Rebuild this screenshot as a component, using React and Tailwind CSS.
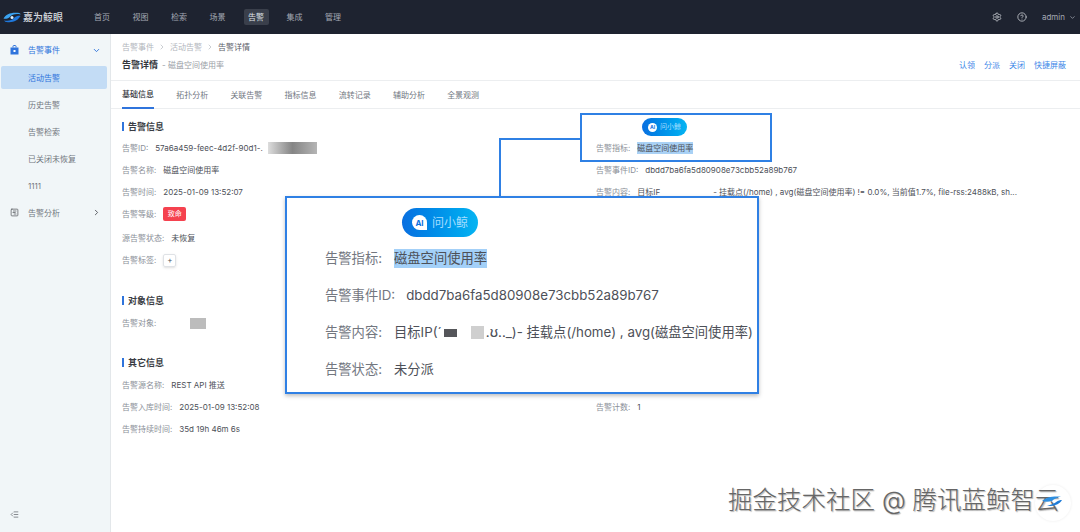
import { ChevronDown, ChevronRight, Settings, CircleHelp, ListIndentDecrease, SquareChartGantt } from "lucide-react";

const navItems = ["首页", "视图", "检索", "场景", "告警", "集成", "管理"];
const tabs = ["基础信息", "拓扑分析", "关联告警", "指标信息", "流转记录", "辅助分析", "全景观测"];
const subItems = ["活动告警", "历史告警", "告警检索", "已关闭未恢复", "1111"];

function Logo() {
  return (
    <svg width="18" height="11" viewBox="0 0 18 11">
      <path d="M0.5 6.5C3 2 8 0 15 0.8C16.5 1 17.5 1.5 17.5 2.4C13 1.4 9 2.4 6.5 5.2C4.5 6.7 2.5 7 0.5 6.5Z" fill="#3aa3f2" />
      <path d="M17.5 4C15 8.5 10 11 3.5 10C2.5 9.8 1.5 9.3 1 8.4C5 9.3 9 8.5 11.5 5.6C13.5 4 15.5 3.6 17.5 4Z" fill="#1f78dc" />
      <circle cx="9" cy="5.4" r="1.5" fill="#dff1ff" />
    </svg>
  );
}

function BagIcon() {
  return (
    <svg width="9" height="10" viewBox="0 0 9 10" className="shrink-0">
      <path d="M3 2.5V1.2C3 .8 3.3.5 3.7.5H5.3C5.7.5 6 .8 6 1.2V2.5" fill="none" stroke="#2f74dc" />
      <path d="M.5 2.5H8.5V9.5H.5Z" fill="#2f74dc" />
      <rect x="3.5" y="5" width="2" height="2" fill="#ffffff" />
    </svg>
  );
}

function Header() {
  return (
    <header className="flex h-[34px] shrink-0 items-center bg-[#1e2330] pr-[4px] text-[8px] text-[#a3a8b3]">
      <div className="flex w-[89.5px] items-center gap-[2px] pl-[3px]">
        <Logo />
        <span className="text-[10px] font-medium text-[#d5d8de]">嘉为鲸眼</span>
      </div>
      <nav className="flex items-center gap-[13.5px]">
        {navItems.map((item) => (
          <span
            key={item}
            className={
              item === "告警"
                ? "flex h-[16px] w-[25px] items-center justify-center rounded-[2px] bg-[#3a3f4b] text-[#dfe2e7]"
                : "flex h-[16px] w-[25px] items-center justify-center"
            }
          >
            {item}
          </span>
        ))}
      </nav>
      <div className="ml-auto flex items-center">
        <Settings size={10} strokeWidth={2} className="text-[#c3c6cd]" />
        <CircleHelp size={10} strokeWidth={2} className="ml-[15px] text-[#c3c6cd]" />
        <span className="ml-[15px]">admin</span>
        <ChevronDown size={7} strokeWidth={2.5} className="ml-[4px]" />
      </div>
    </header>
  );
}

function Sidebar() {
  return (
    <aside className="flex w-[111px] shrink-0 flex-col border-r border-[#e3e7ea] bg-[#f1f6f8] text-[8px] text-[#72777f]">
      <div className="flex h-[32px] items-center pl-[10px] pr-[9px] text-[#2f74dc]">
        <BagIcon />
        <span className="ml-[9px]">告警事件</span>
        <ChevronDown size={9} strokeWidth={2.5} className="ml-auto" />
      </div>
      <div className="ml-[1px] mr-[3px] flex h-[23px] items-center rounded-[2px] bg-[#c3dcf5] pl-[27px] text-[#2f74dc]">活动告警</div>
      {subItems.slice(1).map((item) => (
        <div key={item} className="mt-[4px] flex h-[23px] items-center pl-[28px]">{item}</div>
      ))}
      <div className="mt-[4px] flex h-[23px] items-center pl-[10px] pr-[9px]">
        <SquareChartGantt size={9} strokeWidth={2} className="text-[#55595f]" />
        <span className="ml-[9px]">告警分析</span>
        <ChevronRight size={9} strokeWidth={2.5} className="ml-auto text-[#55595f]" />
      </div>
      <ListIndentDecrease size={9} strokeWidth={1.8} className="ml-[10px] mb-[13px] mt-auto text-[#55595f]" />
    </aside>
  );
}

function Row({ label, children, className = "h-[22px]" }) {
  return (
    <div className={`flex items-center whitespace-nowrap ${className}`}>
      <span className="mr-[7px] text-[#8b9098]">{label}:</span>
      <span className="flex items-center text-[#4d5058]">{children}</span>
    </div>
  );
}

function SectionTitle({ children, className = "" }) {
  return (
    <div className={`flex h-[14px] items-center ${className}`}>
      <span className="h-[9px] w-[2px] bg-[#2f74dc]" />
      <span className="ml-[4px] text-[9px] font-bold leading-none text-[#3a3d44]">{children}</span>
    </div>
  );
}

function LeftColumn() {
  return (
    <div className="w-[474px] shrink-0">
      <SectionTitle>告警信息</SectionTitle>
      <div className="mt-[4px]">
        <Row label="告警ID">
          57a6a459-feec-4d2f-90d1-.
          <span className="ml-[5px] h-[12px] w-[49px] bg-gradient-to-r from-[#dddddd] via-[#858585] to-[#b5b5b5]" />
        </Row>
        <Row label="告警名称">磁盘空间使用率</Row>
        <Row label="告警时间">2025-01-09 13:52:07</Row>
        <Row label="告警等级">
          <span className="flex h-[14px] w-[23px] items-center justify-center rounded-[2px] bg-[#f5424f] text-[7px] text-white">致命</span>
        </Row>
        <Row label="源告警状态" className="mt-[2px] h-[22px]">未恢复</Row>
        <Row label="告警标签">
          <span className="flex h-[13px] w-[13px] items-center justify-center rounded-[2px] border border-[#dfe2e6] text-[8px] leading-none shadow-sm">+</span>
        </Row>
      </div>
      <SectionTitle className="mt-[22px]">对象信息</SectionTitle>
      <div className="mt-[5px]">
        <Row label="告警对象">
          <span className="ml-[27px] h-[11px] w-[16px] bg-[#bcbcbc]" />
        </Row>
      </div>
      <SectionTitle className="mt-[21px]">其它信息</SectionTitle>
      <div className="mt-[5px]">
        <Row label="告警源名称">REST API 推送</Row>
        <Row label="告警入库时间">2025-01-09 13:52:08</Row>
        <Row label="告警持续时间">35d 19h 46m 6s</Row>
      </div>
    </div>
  );
}

function RightColumn() {
  return (
    <div className="min-w-0 flex-1 pt-[40px]">
      <Row label="告警事件ID">dbdd7ba6fa5d80908e73cbb52a89b767</Row>
      <Row label="告警内容">
        目标IF
        <span className="ml-[53px]">- 挂载点(/home) , avg(磁盘空间使用率) != 0.0%, 当前值1.7%, file-rss:2488kB, sh...</span>
      </Row>
      <div className="mt-[193px]">
        <Row label="告警计数">1</Row>
      </div>
    </div>
  );
}

function AskButton({ large }) {
  return (
    <span
      className={
        large
          ? "flex h-[29px] w-[76px] items-center justify-center gap-[5px] rounded-full bg-gradient-to-r from-[#0a6fe0] to-[#07b4f2] text-[12px] text-[#a5deff]"
          : "flex h-[18px] w-[45px] items-center justify-center gap-[3px] rounded-full bg-gradient-to-r from-[#0a6fe0] to-[#07b4f2] text-[7px] text-[#a5deff]"
      }
    >
      <span
        className={
          large
            ? "flex h-[15px] w-[15px] items-center justify-center rounded-full rounded-br-[3px] bg-white text-[8px] font-bold leading-none text-[#0a6fe0]"
            : "flex h-[9px] w-[9px] items-center justify-center rounded-full bg-white text-[5px] font-bold leading-none text-[#0a6fe0]"
        }
      >
        AI
      </span>
      问小鲸
    </span>
  );
}

function SmallCallout() {
  return (
    <>
      <div className="absolute left-[499px] top-[138px] h-[59px] w-[82px] border-l-2 border-t-2 border-[#2f80e4]" />
      <div className="absolute left-[580px] top-[113px] flex h-[49px] w-[192px] flex-col border-2 border-[#2f80e4] bg-white pl-[14px] text-[8px]">
        <div className="ml-[46px] mt-[3px]"><AskButton /></div>
        <div className="mt-[6px] flex items-center whitespace-nowrap">
          <span className="mr-[7px] text-[#8b9098]">告警指标:</span>
          <span className="bg-[#a9d1f5] text-[#4d5058]">磁盘空间使用率</span>
        </div>
      </div>
    </>
  );
}

function LargeCallout() {
  return (
    <div className="absolute left-[285px] top-[196px] h-[198px] w-[474px] border-2 border-[#2f80e4] bg-white pl-[38px] text-[13.3px] shadow-[0_2px_4px_rgba(0,0,0,0.25)]">
      <div className="ml-[77px] mt-[10px]"><AskButton large /></div>
      <div className="mt-[3px] flex h-[37px] items-center whitespace-nowrap">
        <span className="mr-[12px] text-[#73777f]">告警指标:</span>
        <span className="bg-[#a3d0f8] text-[#4d5058]">磁盘空间使用率</span>
      </div>
      <div className="flex h-[37px] items-center whitespace-nowrap">
        <span className="mr-[11px] text-[#73777f]">告警事件ID:</span>
        <span className="text-[#4d5058]">dbdd7ba6fa5d80908e73cbb52a89b767</span>
      </div>
      <div className="flex h-[37px] items-center whitespace-nowrap">
        <span className="mr-[12px] text-[#73777f]">告警内容:</span>
        <span className="flex items-center text-[#4d5058]">
          目标IP(´
          <span className="ml-[2px] h-[8px] w-[13px] bg-[#55565a]" />
          <span className="ml-[14px] h-[13px] w-[13px] bg-[#cfcfcf]" />
          <span className="ml-[2px]">.ʊ.._)- 挂载点(/home) , avg(磁盘空间使用率)</span>
        </span>
      </div>
      <div className="flex h-[37px] items-center whitespace-nowrap">
        <span className="mr-[12px] text-[#73777f]">告警状态:</span>
        <span className="text-[#4d5058]">未分派</span>
      </div>
    </div>
  );
}

function Content() {
  return (
    <main className="flex min-w-0 flex-1 flex-col text-[8px]">
      <div className="h-[46px] shrink-0 pl-[11px] pr-[14px]">
        <div className="flex h-[13px] items-center pt-[12px] text-[#b2b6bc]">
          <span>告警事件</span>
          <ChevronRight size={8} className="mx-[4px]" />
          <span>活动告警</span>
          <ChevronRight size={8} className="mx-[4px]" />
          <span className="text-[#5c6068]">告警详情</span>
        </div>
        <div className="mt-[9px] flex h-[18px] items-center">
          <span className="text-[9px] font-bold text-[#33363c]">告警详情</span>
          <span className="ml-[4px] text-[#9a9ea6]">- 磁盘空间使用率</span>
          <div className="ml-auto flex gap-[9px] text-[#3d87e8]">
            <span>认领</span>
            <span>分派</span>
            <span>关闭</span>
            <span>快捷屏蔽</span>
          </div>
        </div>
      </div>
      <div className="flex h-[29px] shrink-0 items-stretch gap-[22.2px] border-y border-[#eceef0] pl-[11px] text-[#72777f]">
        {tabs.map((tab, i) => (
          <span
            key={tab}
            className={
              i === 0
                ? "-mb-px flex items-center border-b-2 border-[#2f74dc] font-medium text-[#33363c]"
                : "flex items-center"
            }
          >
            {tab}
          </span>
        ))}
      </div>
      <div className="flex flex-1 pl-[11px] pt-[10px]">
        <LeftColumn />
        <RightColumn />
      </div>
    </main>
  );
}

export default function App() {
  return (
    <div
      className="relative flex h-[532px] w-[1080px] flex-col overflow-hidden bg-white"
      style={{ fontFamily: 'Inter, "Noto Sans CJK SC", sans-serif' }}
    >
      <Header />
      <div className="flex min-h-0 flex-1">
        <Sidebar />
        <Content />
      </div>
      <SmallCallout />
      <LargeCallout />
      <span className="absolute left-[1035px] top-[485px] h-[36px] w-[36px] rounded-full bg-white shadow-[0_0_3px_rgba(0,0,0,0.08)]" />
      <span className="absolute left-[728px] top-[485px] whitespace-nowrap text-[24.5px] font-light leading-[30px] text-[#666666] [text-shadow:1px_1px_1px_rgba(0,0,0,0.3)]">
        掘金技术社区 @ 腾讯蓝鲸智云
      </span>
      <svg width="22" height="12" viewBox="0 0 22 12" className="absolute left-[1041px] top-[495px]">
        <path d="M1 6C5 2 11 1 20 1.5C16 2.5 13 4 11 6C8 7 4 7 1 6Z" fill="#2f8fe0" />
        <path d="M21 5C19 9 13 11.5 6 11C10 10 13.5 8.5 15.5 6.8C17 5.6 19 5 21 5Z" fill="#1f7cd8" />
      </svg>
    </div>
  );
}
